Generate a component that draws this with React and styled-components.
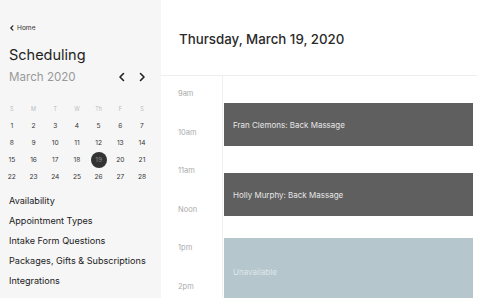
import React from "react";
import styled, { createGlobalStyle } from "styled-components";

const Global = createGlobalStyle`
  html, body { margin: 0; padding: 0; background: #fff; }
  body { font-family: Inter, "Noto Sans", sans-serif; color: #222; }
  * { box-sizing: border-box; }
`;

const Page = styled.div`
  display: flex;
  width: 477px;
  height: 298px;
  overflow: hidden;
`;

const Sidebar = styled.aside`
  width: 161px;
  flex: none;
  background: #f6f6f6;
  padding: 23px 0 0 9px;
  display: flex;
  flex-direction: column;
`;

const Back = styled.div`
  display: flex;
  align-items: center;
  gap: 2px;
  font-size: 6.6px;
  color: #333;
  height: 10px;
`;

const Title = styled.h1`
  margin: 13px 0 0;
  font-size: 14.5px;
  font-weight: 400;
  color: #222;
  line-height: 18px;
`;

const MonthRow = styled.div`
  display: flex;
  align-items: center;
  justify-content: space-between;
  margin-top: 4px;
  padding-right: 14px;
  height: 18px;
`;

const Month = styled.span`
  font-size: 11.6px;
  color: #999;
`;

const Arrows = styled.div`
  display: flex;
  gap: 10px;
  align-items: center;
`;

const CalGrid = styled.div`
  display: grid;
  grid-template-columns: repeat(7, 21.7px);
  grid-auto-rows: 17px;
  margin: 14px 0 0 -8px;
  align-items: center;
  justify-items: center;
`;

const DayHead = styled.span`
  font-size: 5.5px;
  color: #bbb;
`;

const Day = styled.span`
  width: 16px;
  height: 16px;
  border-radius: 50%;
  display: flex;
  align-items: center;
  justify-content: center;
  font-size: 6.6px;
  color: ${(p) => (p.$active ? "#888" : "#333")};
  background: ${(p) => (p.$active ? "#333" : "transparent")};
`;

const Menu = styled.nav`
  display: flex;
  flex-direction: column;
  margin-top: 6px;
`;

const MenuItem = styled.div`
  font-size: 9.1px;
  color: #222;
  height: 20px;
  line-height: 20px;
  white-space: nowrap;
`;

const Main = styled.main`
  flex: 1;
  display: flex;
  flex-direction: column;
  background: #fff;
`;

const Header = styled.header`
  height: 76px;
  flex: none;
  border-bottom: 1.5px solid #eee;
  padding: 31px 0 0 18px;
  font-size: 13.3px;
  color: #2a2a2a;
  font-weight: 500;
`;

const Body = styled.div`
  flex: 1;
  display: flex;
`;

const Times = styled.div`
  width: 62px;
  flex: none;
  border-right: 1px solid #f0f0f0;
  padding: 13px 0 0 17px;
  display: flex;
  flex-direction: column;
`;

const TimeLabel = styled.span`
  font-size: 7.5px;
  color: #aaa;
  height: 38.6px;
`;

const Track = styled.div`
  flex: 1;
  position: relative;
  margin-right: 4px;
`;

const Event = styled.div`
  position: absolute;
  left: 1px;
  right: 0;
  background: ${(p) => (p.$unavailable ? "#b6c6cd" : "#5f5f5f")};
  color: ${(p) => (p.$unavailable ? "#dfe7ea" : "#e6e6e6")};
  font-size: 8px;
  display: flex;
  align-items: center;
  padding-left: 9px;
`;

const Chevron = ({ dir = "left", size = 10, stroke = 1.6 }) => (
  <svg width={size} height={size} viewBox="0 0 10 10" fill="none">
    <path
      d={dir === "left" ? "M6.5 1.5 3 5l3.5 3.5" : "M3.5 1.5 7 5 3.5 8.5"}
      stroke="#222"
      strokeWidth={stroke}
      strokeLinecap="round"
      strokeLinejoin="round"
    />
  </svg>
);

const heads = ["S", "M", "T", "W", "Th", "F", "S"];
const days = Array.from({ length: 28 }, (_, i) => i + 1);
const menu = [
  "Availability",
  "Appointment Types",
  "Intake Form Questions",
  "Packages, Gifts & Subscriptions",
  "Integrations",
];
const times = ["9am", "10am", "11am", "Noon", "1pm", "2pm"];
const events = [
  { top: 27, height: 43, label: "Fran Clemons: Back Massage" },
  { top: 97, height: 43, label: "Holly Murphy: Back Massage" },
  { top: 162, height: 68, label: "Unavailable", unavailable: true },
];

export default function App() {
  return (
    <>
      <Global />
      <Page>
        <Sidebar>
          <Back>
            <Chevron size={6} stroke={2} />
            Home
          </Back>
          <Title>Scheduling</Title>
          <MonthRow>
            <Month>March 2020</Month>
            <Arrows>
              <Chevron />
              <Chevron dir="right" />
            </Arrows>
          </MonthRow>
          <CalGrid>
            {heads.map((h, i) => (
              <DayHead key={i}>{h}</DayHead>
            ))}
            {days.map((d) => (
              <Day key={d} $active={d === 19}>
                {d}
              </Day>
            ))}
          </CalGrid>
          <Menu>
            {menu.map((m) => (
              <MenuItem key={m}>{m}</MenuItem>
            ))}
          </Menu>
        </Sidebar>
        <Main>
          <Header>Thursday, March 19, 2020</Header>
          <Body>
            <Times>
              {times.map((t) => (
                <TimeLabel key={t}>{t}</TimeLabel>
              ))}
            </Times>
            <Track>
              {events.map((e) => (
                <Event
                  key={e.label}
                  $unavailable={e.unavailable}
                  style={{ top: e.top, height: e.height }}
                >
                  {e.label}
                </Event>
              ))}
            </Track>
          </Body>
        </Main>
      </Page>
    </>
  );
}
